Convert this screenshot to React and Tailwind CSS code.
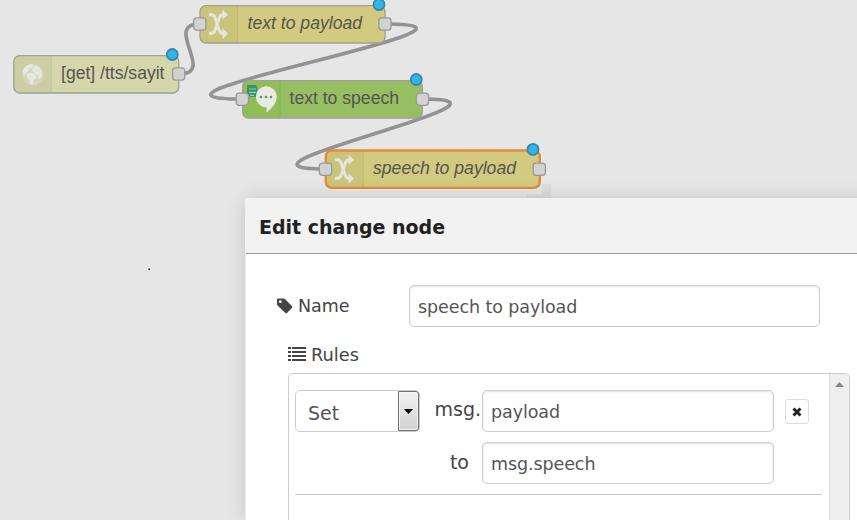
import React from "react";

function Port({ x, y }) {
  return <rect x={x - 6.1} y={y - 6.1} width="12.2" height="12.2" rx="3" fill="#d2d2d2" stroke="#999" strokeWidth="1.3" />;
}

function Dot({ x, y }) {
  return <circle cx={x} cy={y} r="5.5" fill="#2fb5ea" stroke="#3c85ab" strokeWidth="1.8" />;
}

function Shuffle({ x, y }) {
  return (
    <g transform={`translate(${x} ${y})`} fill="none" stroke="#e6e6e0" strokeWidth="2.9">
      <path d="M0 5h2.500c2.500 0 3.200 1.500 4 4l3.500 11c.8 2.500 1.800 3.800 4 3.800h1" />
      <path d="M0 23.500h2.500c2.500 0 3.200-1.500 4-4L10 8.800C10.800 6.300 11.800 5 14 5h1" />
      <path d="M13.500 0l5.500 5-5.500 5zM13.500 18.500l5.500 5.300-5.500 5.300z" fill="#e6e6e0" stroke="none" />
    </g>
  );
}

function Node({ x, y, w, fill, shade = "#cac47b", label, tx, tw, italic, selected, children }) {
  return (
    <g>
      <rect x={x} y={y} width={w} height="37.4" rx="6" fill={fill} />
      <path d={`M${x + 6} ${y}h31.500v37.400h-31.500q-6 0-6-6v-25.400q0-6 6-6z`} fill={shade} />
      <path d={`M${x + 37.5} ${y}v37.400`} stroke="#000" strokeOpacity=".07" />
      {children}
      <rect x={x} y={y} width={w} height="37.4" rx="6" fill="none" stroke={selected ? "#e58a3c" : "#a0a098"} strokeWidth={selected ? 2.4 : 1.3} />
      <text x={tx} y={y + 23.5} textLength={tw} lengthAdjust="spacingAndGlyphs" fill="#555" className={italic ? "font-['Liberation_Sans',Arial,sans-serif] text-[17.5px] italic" : "font-['Liberation_Sans',Arial,sans-serif] text-[17.5px]"}>
        {label}
      </text>
    </g>
  );
}

function Flow() {
  return (
    <svg width="857" height="520" viewBox="0 0 857 520" className="block">
      <g fill="none" stroke="#939393" strokeWidth="3.6">
        <path d="M179 74C217 74 162 24 200 24" />
        <path d="M385 24C534 24 93 99 242 99" />
        <path d="M422.500 99C548.500 99 199 169 325 169" />
      </g>
      <Node x={13.8} y={55.6} w={165} fill="#d6d6ab" shade="#cdcda5" label="[get] /tts/sayit" tx={61} tw={103.5}>
        <circle cx="32.700" cy="74.500" r="10.800" fill="#d6d6ba" />
        <path d="M22.500 71l3-4.500 5-2.500 3.500 1-1.500 2.500-3 1-1.500 3-2.500 2-1.500 2zM26.500 74l3.500-1.500 3 .5 3 2 .5 2-3 3.500-.5 3.500-2.500.5-1.500-5-2-1.500zM33 68l2.500-2.500 4 2 2.500 4-.5 5-2.500 3-1.500-4-3-2.500-2.500-2z" fill="#e8e8e2" />
      </Node>
      <Node x={200} y={5.6} w={185} fill="#d2ca7e" label="text to payload" tx={247.5} tw={114.5} italic>
        <Shuffle x={209} y={9.800} />
      </Node>
      <Node x={242.600} y={80.600} w={179.800} fill="#95bf60" shade="#8fbe55" label="text to speech" tx={289.500} tw={109.500}>
        <path d="M247 85h8.500l2 2v10h-7.500l-3-3z" fill="#35956a" />
        <path d="M249 89h7M249 92.300h7M250 95.300h4" stroke="#a5ceac" strokeWidth="1.200" />
        <path d="M266 86.300a10.500 10.500 0 0 1 10.700 10.500c0 6-4.200 11-10.200 16l.2-5.500A10.500 10.500 0 0 1 266 86.300z" fill="#e8ebe4" />
        <g fill="#4f9a70"><circle cx="261" cy="97" r="1.300" /><circle cx="266" cy="97" r="1.300" /><circle cx="271" cy="97" r="1.300" /></g>
      </Node>
      <path d="M542 184h9v14h-24v-4h15z" fill="#dedede" />
      <Node x={325.800} y={150.500} w={214} fill="#d2ca7e" label="speech to payload" tx={373} tw={143} italic selected>
        <Shuffle x={335} y={154.800} />
      </Node>
      <Port x={178.700} y={74} />
      <Port x={199.800} y={24} />
      <Port x={385} y={24} />
      <Port x={242.300} y={99.200} />
      <Port x={422.500} y={99.200} />
      <Port x={325.500} y={169.200} />
      <Port x={539.300} y={169.200} />
      <Dot x={172.300} y={54.500} />
      <Dot x={379} y={4.600} />
      <Dot x={416.300} y={79.500} />
      <Dot x={533} y={149.400} />
      <text x="147" y="270" fill="#111" className="font-['Liberation_Sans',Arial,sans-serif] text-[15px]">.</text>
    </svg>
  );
}

function TagIcon() {
  return (
    <svg width="16" height="16" viewBox="0 0 16 16" className="block">
      <path fillRule="evenodd" d="M0 1.500Q0 .5 1 .5h5.500q1 0 2 1L15 8.200q.8.8 0 1.600l-5 5.200q-.8.8-1.600 0L1 8Q0 7 0 6zM3.300 2.300a1.400 1.400 0 1 0 0 2.800 1.400 1.400 0 0 0 0-2.800z" fill="#444" />
    </svg>
  );
}

function ListIcon() {
  return (
    <svg width="18" height="14" viewBox="0 0 18 14" className="-mt-0.5 block" shapeRendering="crispEdges">
      <path d="M0 0h3v2H0zM4 0h14v2H4zM0 4h3v2H0zM4 4h14v2H4zM0 8h3v2H0zM4 8h14v2H4zM0 12h3v2H0zM4 12h14v2H4z" fill="#444" />
    </svg>
  );
}

function Field({ className, children }) {
  return (
    <div className={`flex h-[42px] shrink-0 items-center rounded-[5px] border border-[#ccc] bg-white pt-[3px] pl-2 text-[17.5px] tracking-[-0.09px] text-[#555] shadow-[inset_0_1px_2px_rgba(0,0,0,0.12)] ${className}`}>
      {children}
    </div>
  );
}

function Dialog() {
  return (
    <section className="absolute top-[198px] left-[245px] flex h-[322px] w-[640px] flex-col border-l border-[#efefef] bg-white font-['DejaVu_Sans',Verdana,sans-serif] leading-none text-[#444] shadow-[0_0_17px_rgba(0,0,0,0.15)]">
      <header className="flex h-14 shrink-0 items-center border-b border-[#999] bg-[#f2f2f2] pt-1 pl-[13px] text-[19px] font-bold text-[#222]">Edit change node</header>
      <div className="flex pt-[31px]">
        <div className="flex w-[163px] items-center gap-[5px] pl-[31px] text-[17.5px]">
          <TagIcon />
          <span className="pt-0.5">Name</span>
        </div>
        <Field className="w-[411px]">speech to payload</Field>
      </div>
      <div className="mt-[18px] flex h-[20px] items-center gap-[5px] pl-[42px] text-[17.8px]">
        <ListIcon />
        <span>Rules</span>
      </div>
      <div className="mt-2 ml-[42px] flex w-[562px] grow rounded-t-[5px] border border-b-0 border-[#ccc]">
        <div className="flex grow flex-col pt-4 pl-1.5">
          <div className="flex">
            <div className="flex h-[42px] w-[125px] items-center justify-between rounded-[5px] border border-[#ccc] pl-[12px] text-[19px] text-[#555]">
              <span className="pt-1">Set</span>
              <span className="flex h-10 w-[21px] items-center justify-center rounded-r-[3px] border border-[#707070] bg-gradient-to-b from-[#f2f2f2] to-[#d2d2d2] shadow-[inset_0_0_0_1px_#f5f5f5]">
                <svg width="9" height="5" viewBox="0 0 9 5"><path d="M0 0h9L4.500 5z" fill="#000" /></svg>
              </span>
            </div>
            <div className="flex h-[38px] w-[62px] items-center justify-end pr-px text-[19px]">msg.</div>
            <Field className="w-[292px]">payload</Field>
            <button className="mt-[9px] ml-[11px] flex h-[25px] w-6 items-center justify-center rounded-[3px] border border-[#ddd] bg-white">
              <svg width="10" height="10" viewBox="0 0 10 10"><path d="M1.500 1.500l7 7M8.500 1.500l-7 7" stroke="#222" strokeWidth="2.900" /></svg>
            </button>
          </div>
          <div className="mt-2.5 flex">
            <div className="flex h-[40px] w-[187px] items-center justify-end pr-[13px] text-[19px]">to</div>
            <Field className="w-[292px]">msg.speech</Field>
          </div>
          <hr className="mt-2.5 w-[527px] border-[#ccc]" />
        </div>
        <div className="flex w-5 shrink-0 justify-center rounded-tr-[4px] border-l border-[#e0e0e0] bg-[#efefef] pt-[8px]">
          <svg width="9" height="5" viewBox="0 0 9 5"><path d="M0 5h9L4.500 0z" fill="#888" /></svg>
        </div>
      </div>
    </section>
  );
}

export default function App() {
  return (
    <main className="relative h-[520px] w-[857px] overflow-hidden bg-[#e6e6e6]">
      <Flow />
      <Dialog />
    </main>
  );
}
